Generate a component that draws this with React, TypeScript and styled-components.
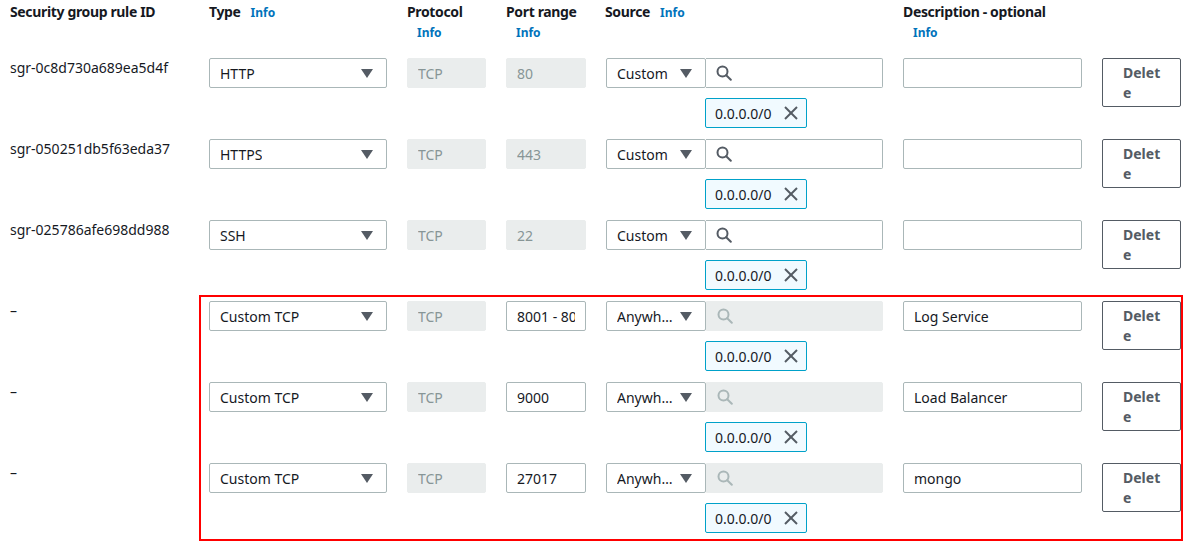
import React from "react";
import styled, { createGlobalStyle } from "styled-components";

const Global = createGlobalStyle`
  html, body { margin: 0; padding: 0; background: #ffffff; overflow: hidden; }
  body { font-family: "Noto Sans", "Open Sans", Arial, sans-serif; font-size: 14px; color: #16191f; }
  * { box-sizing: border-box; }
`;

const COLS = "179px 178px 79px 80px 277px 179px 79px";

const Page = styled.div`
  display: flex;
  flex-direction: column;
  gap: 11px;
  padding: 2px 0 20px 10px;
`;

const HeaderRow = styled.div`
  display: grid;
  grid-template-columns: ${COLS};
  column-gap: 20px;
  margin-bottom: 4px;
`;

const HeaderCell = styled.div<{ $shift?: number }>`
  font-weight: 700;
  font-size: 14px;
  line-height: 20px;
  letter-spacing: -0.35px;
  color: #16191f;
  margin-left: ${(p) => p.$shift ?? 0}px;
`;

const Info = styled.span`
  display: inline-block;
  padding: 0 10px;
  font-size: 12px;
  font-weight: 700;
  letter-spacing: 0;
  color: #0073bb;
  line-height: 20px;
`;

const Row = styled.div`
  display: grid;
  grid-template-columns: ${COLS};
  column-gap: 20px;
  align-items: start;
  height: 70px;
`;

const RuleId = styled.div`
  line-height: 20px;
  font-size: 14px;
  color: #16191f;
`;

const SelectBox = styled.div<{ $w?: number }>`
  position: relative;
  width: ${(p) => (p.$w ? `${p.$w}px` : "100%")};
  height: 30px;
  border: 1px solid #aab7b8;
  border-radius: 2px;
  background: #fff;
  padding: 0 30px 0 10px;
  display: flex;
  align-items: center;
  font-size: 14px;
  color: #16191f;
  flex-shrink: 0;
`;

const SelectText = styled.span`
  white-space: nowrap;
  overflow: hidden;
  text-overflow: ellipsis;
`;

const Caret = styled.span`
  position: absolute;
  right: 13px;
  top: 10px;
  width: 0;
  height: 0;
  border-left: 6px solid transparent;
  border-right: 6px solid transparent;
  border-top: 9px solid #545b64;
`;

const TextInput = styled.input<{ $disabled?: boolean }>`
  width: 100%;
  height: 30px;
  border: 1px solid ${(p) => (p.$disabled ? "#eaeded" : "#aab7b8")};
  background: ${(p) => (p.$disabled ? "#eaeded" : "#fff")};
  color: ${(p) => (p.$disabled ? "#879596" : "#16191f")};
  border-radius: 2px;
  padding: 0 10px;
  font-family: "Noto Sans", "Open Sans", Arial, sans-serif;
  font-size: 14px;
  outline: none;
  margin: 0;
`;

const SourceCell = styled.div`
  display: flex;
  flex-direction: column;
  gap: 10px;
`;

const SourceTop = styled.div`
  display: flex;
`;

const Search = styled.div<{ $disabled?: boolean }>`
  width: 177px;
  height: 30px;
  border: 1px solid ${(p) => (p.$disabled ? "#eaeded" : "#aab7b8")};
  border-left: ${(p) => (p.$disabled ? "1px solid #eaeded" : "none")};
  background: ${(p) => (p.$disabled ? "#eaeded" : "#fff")};
  border-radius: 0 2px 2px 0;
  display: flex;
  align-items: center;
  padding-left: 10px;
  color: ${(p) => (p.$disabled ? "#aab7b8" : "#545b64")};
`;

const Token = styled.div`
  margin-left: 99px;
  width: 102px;
  height: 30px;
  border: 1px solid #00a1c9;
  background: #f1faff;
  border-radius: 2px;
  display: flex;
  align-items: center;
  justify-content: space-between;
  padding: 0 7px 0 9px;
  font-size: 14px;
  color: #16191f;
`;

const DeleteButton = styled.button`
  width: 79px;
  height: 49px;
  border: 1px solid #545b64;
  border-radius: 2px;
  background: #fff;
  color: #545b64;
  font-family: "Noto Sans", "Open Sans", Arial, sans-serif;
  font-weight: 700;
  font-size: 14px;
  line-height: 20px;
  padding: 4px 12px 4px 20px;
  text-align: left;
  word-break: break-all;
  margin: 0;
`;

const Group = styled.div`
  position: relative;
  display: flex;
  flex-direction: column;
  gap: 11px;
`;

const Highlight = styled.div`
  position: absolute;
  left: 189px;
  top: -6px;
  width: 984px;
  height: 246px;
  border: 2px solid #ff0000;
  pointer-events: none;
`;

const SearchIcon = () => (
  <svg width="16" height="16" viewBox="0 0 16 16" fill="none">
    <circle cx="6.5" cy="6.5" r="5" stroke="currentColor" strokeWidth="2" />
    <line x1="10.2" y1="10.2" x2="14.8" y2="14.8" stroke="currentColor" strokeWidth="2" strokeLinecap="round" />
  </svg>
);

const CloseIcon = () => (
  <svg width="16" height="16" viewBox="0 0 16 16" fill="none">
    <line x1="2" y1="2" x2="14" y2="14" stroke="#545b64" strokeWidth="2" />
    <line x1="14" y1="2" x2="2" y2="14" stroke="#545b64" strokeWidth="2" />
  </svg>
);

type Rule = {
  id: string;
  type: string;
  port: string;
  source: string;
  desc: string;
  custom: boolean;
};

const existing: Rule[] = [
  { id: "sgr-0c8d730a689ea5d4f", type: "HTTP", port: "80", source: "Custom", desc: "", custom: false },
  { id: "sgr-050251db5f63eda37", type: "HTTPS", port: "443", source: "Custom", desc: "", custom: false },
  { id: "sgr-025786afe698dd988", type: "SSH", port: "22", source: "Custom", desc: "", custom: false },
];

const added: Rule[] = [
  { id: "–", type: "Custom TCP", port: "8001 - 8002", source: "Anywhere", desc: "Log Service", custom: true },
  { id: "–", type: "Custom TCP", port: "9000", source: "Anywhere", desc: "Load Balancer", custom: true },
  { id: "–", type: "Custom TCP", port: "27017", source: "Anywhere", desc: "mongo", custom: true },
];

const RuleRow = ({ r }: { r: Rule }) => (
  <Row>
    <RuleId>{r.id}</RuleId>
    <SelectBox>
      <SelectText>{r.type}</SelectText>
      <Caret />
    </SelectBox>
    <TextInput $disabled readOnly value="TCP" />
    <TextInput $disabled={!r.custom} readOnly value={r.port} />
    <SourceCell>
      <SourceTop>
        <SelectBox $w={100}>
          <SelectText>{r.source}</SelectText>
          <Caret />
        </SelectBox>
        <Search $disabled={r.custom}>
          <SearchIcon />
        </Search>
      </SourceTop>
      <Token>
        <span>0.0.0.0/0</span>
        <CloseIcon />
      </Token>
    </SourceCell>
    <TextInput readOnly value={r.desc} />
    <DeleteButton>Delete</DeleteButton>
  </Row>
);

export default function App() {
  return (
    <>
      <Global />
      <Page>
        <HeaderRow>
          <HeaderCell>Security group rule ID</HeaderCell>
          <HeaderCell>
            Type<Info>Info</Info>
          </HeaderCell>
          <HeaderCell>
            Protocol<Info>Info</Info>
          </HeaderCell>
          <HeaderCell>
            Port range<Info>Info</Info>
          </HeaderCell>
          <HeaderCell $shift={-1}>
            Source<Info>Info</Info>
          </HeaderCell>
          <HeaderCell>
            Description - optional<Info>Info</Info>
          </HeaderCell>
          <div />
        </HeaderRow>
        {existing.map((r) => (
          <RuleRow key={r.id} r={r} />
        ))}
        <Group>
          <Highlight />
          {added.map((r, i) => (
            <RuleRow key={i} r={r} />
          ))}
        </Group>
      </Page>
    </>
  );
}
